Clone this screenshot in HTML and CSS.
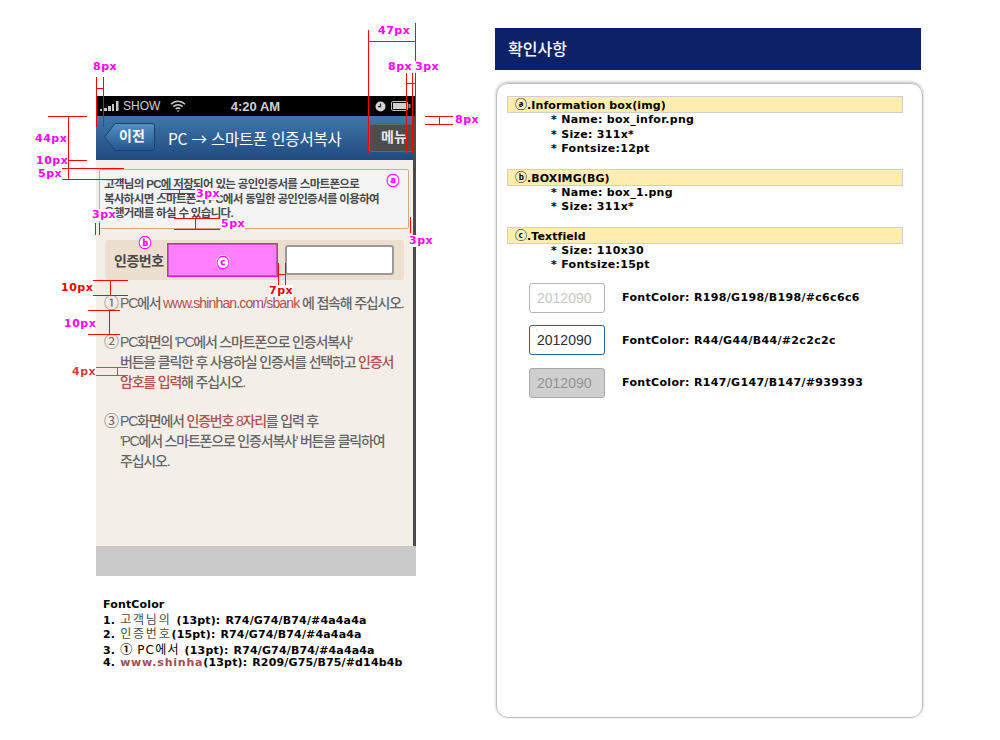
FILE: index.html
```html
<!DOCTYPE html>
<html lang="ko">
<head>
    <meta charset="UTF-8">
    <title>인증서복사 화면 가이드</title>
    <link rel="stylesheet" href="styles.css">
</head>
<body>
<div class="page">
    <div class="left">
        <div class="phone">
            <div class="status">
                <span class="status-left">
                    <svg class="signal" width="19" height="10" viewBox="0 0 19 10"><path d="M0 8h2v2H0zM4 7h3v3H4zM8 5h3v5H8zM12 3h2v7h-2zM16 0h2.500v10H16z" fill="#c8c8c8"/></svg>
                    <span>SHOW</span>
                    <svg class="wifi" width="16" height="12" viewBox="0 0 16 12"><path d="M1 4.200a10 10 0 0 1 14 0M3.400 6.600a6.600 6.600 0 0 1 9.200 0M5.800 9a3 3 0 0 1 4.400 0" fill="none" stroke="#d0d0d0" stroke-width="1.500"/><path d="M8 12l-1.500-1.600h3z" fill="#d0d0d0"/></svg>
                </span>
                <span class="clock">4:20 AM</span>
                <span class="status-right">
                    <svg width="11" height="11" viewBox="0 0 11 11"><circle cx="5.500" cy="5.500" r="5" fill="#d4d4d4"/><path d="M5.500 2.500v3.200H3" fill="none" stroke="#222" stroke-width="1.200"/></svg>
                    <svg width="20" height="10" viewBox="0 0 20 10"><rect x=".5" y=".5" width="16" height="9" rx="1.500" fill="none" stroke="#bbb"/><rect x="2" y="2" width="13" height="6" fill="#d0d0d0"/><rect x="17.500" y="3" width="2" height="4" fill="#888"/></svg>
                </span>
            </div>
            <div class="nav">
                <span class="back">
                    <svg class="back-shape" width="51" height="28" viewBox="0 0 51 28">
                        <defs><linearGradient id="backFill" x1="0" y1="0" x2="0" y2="1"><stop offset="0" stop-color="#5590c4"/><stop offset="1" stop-color="#24578f"/></linearGradient></defs>
                        <path d="M11 .5h37a2.500 2.500 0 0 1 2.500 2.500v22a2.500 2.500 0 0 1-2.500 2.500H11L.7 14z" fill="url(#backFill)" stroke="#1c3f6c"/>
                    </svg>
                    <span class="back-text">이전</span>
                </span>
                <span class="nav-title">PC → 스마트폰 인증서복사</span>
                <span class="menu">메뉴</span>
            </div>
            <div class="content">
                <div class="info">
                    <p>고객님의 PC에 저장되어 있는 공인인증서를 스마트폰으로</p>
                    <p>복사하시면 스마트폰과 PC에서 동일한 공인인증서를 이용하여</p>
                    <p>은행거래를 하실 수 있습니다.</p>
                </div>
                <div class="code-box">
                    <span class="code-label">인증번호</span>
                    <span class="field-mark"></span>
                    <span class="field"></span>
                </div>
                <ol class="steps">
                    <li class="step">
                        <p><span class="num">①</span>PC에서 <em class="link">www.shinhan.com/sbank</em> 에 접속해 주십시오.</p>
                    </li>
                    <li class="step">
                        <p><span class="num">②</span>PC화면의 'PC에서 스마트폰으로 인증서복사'</p>
                        <p class="cont">버튼을 클릭한 후 사용하실 인증서를 선택하고 <em>인증서</em></p>
                        <p class="cont"><em>암호를 입력</em>해 주십시오.</p>
                    </li>
                    <li class="step">
                        <p><span class="num">③</span>PC화면에서 <em>인증번호 8자리</em>를 입력 후</p>
                        <p class="cont">'PC에서 스마트폰으로 인증서복사' 버튼을 클릭하여</p>
                        <p class="cont">주십시오.</p>
                    </li>
                </ol>
            </div>
            <div class="phone-foot"></div>
        </div>
        <div class="legend">
            <p>FontColor</p>
            <p>1. <span class="gray">고객님의</span> (13pt): R74/G74/B74/#4a4a4a</p>
            <p>2. <span class="gray">인증번호</span>(15pt): R74/G74/B74/#4a4a4a</p>
            <p>3. <span class="circ">①</span> <span class="wide">PC에서</span> (13pt): R74/G74/B74/#4a4a4a</p>
            <p>4. <span class="red">www.shinha</span>(13pt): R209/G75/B75/#d14b4b</p>
        </div>
    </div>

    <div class="right">
        <h1 class="title">확인사항</h1>
        <div class="panel">
            <section class="spec">
                <h2><span class="circ">ⓐ</span>.Information box(img)</h2>
                <p>* Name: box_infor.png</p>
                <p>* Size: 311x*</p>
                <p>* Fontsize:12pt</p>
            </section>
            <section class="spec">
                <h2><span class="circ">ⓑ</span>.BOXIMG(BG)</h2>
                <p>* Name: box_1.png</p>
                <p>* Size: 311x*</p>
            </section>
            <section class="spec">
                <h2><span class="circ">ⓒ</span>.Textfield</h2>
                <p>* Size: 110x30</p>
                <p>* Fontsize:15pt</p>
            </section>
            <div class="samples">
                <div class="sample"><span class="tf tf-idle">2012090</span><span>FontColor: R198/G198/B198/#c6c6c6</span></div>
                <div class="sample"><span class="tf tf-focus">2012090</span><span>FontColor: R44/G44/B44/#2c2c2c</span></div>
                <div class="sample"><span class="tf tf-off">2012090</span><span>FontColor: R147/G147/B147/#939393</span></div>
            </div>
        </div>
    </div>

    <!-- measurement marks drawn over the screen -->
    <svg class="marks" width="1000" height="740" viewBox="0 0 1000 740">
        <path d="M96.500 77v50M103.500 77v50M96 88.500h8
                 M368.500 30v123M415.500 23v38M368 41.500h48
                 M406.500 73v80M412.500 73v80M415.500 73v80M406 83.500h10
                 M425 116.500h28M425 124.500h28M439.500 116v9
                 M48 116.500h39M68.500 116v64M67 160.500h20M53 168.500h71M62 179.500h62
                 M161 189.500h34M161 193.500h34M179.500 189v5
                 M174 218.500h46M174 229.500h46M195.500 218v12
                 M95.500 223v12M99.500 223v12M410.500 217v16M413.500 217v16"
              fill="none" stroke="#f00" stroke-width="1"/>
        <path d="M93 280.500h35M93 295.500h35M110.500 280v16
                 M88 310.500h32M88 334.500h32M109.500 310v25
                 M278.500 263v22M285.500 263v22M278 274.500h8"
              fill="none" stroke="#f00" stroke-width="1"/>
        <path d="M96 367.500h32M96 375.500h32M117.500 367v9" fill="none" stroke="#d44" stroke-width="1"/>
    </svg>
    <span class="mark m-left8">8px</span>
    <span class="mark m-47">47px</span>
    <span class="mark m-right8">8px</span>
    <span class="mark m-right3">3px</span>
    <span class="mark m-side8">8px</span>
    <span class="mark m-44">44px</span>
    <span class="mark m-10a">10px</span>
    <span class="mark m-5a">5px</span>
    <span class="mark m-3a">3px</span>
    <span class="mark m-5b">5px</span>
    <span class="mark m-3b">3px</span>
    <span class="mark m-3c">3px</span>
    <span class="mark mark-red m-10b">10px</span>
    <span class="mark m-10c">10px</span>
    <span class="mark mark-red m-7">7px</span>
    <span class="mark mark-soft m-4">4px</span>
    <span class="tag tag-a">ⓐ</span>
    <span class="tag tag-b">ⓑ</span>
    <span class="tag tag-c">ⓒ</span>
</div>
</body>
</html>
```

FILE: styles.css
```css
body {
    margin: 0;
    background-color: #ffffff;
    font-family: "DejaVu Sans", "Noto Sans CJK KR", sans-serif;
    color: #000000;
}
p, h1, h2, ol {
    margin: 0;
    padding: 0;
}
.page {
    position: relative;
    width: 1000px;
    height: 740px;
    overflow: hidden;
    display: flex;
}

/* left column */
.left {
    width: 320px;
    margin: 96px 0 0 96px;
}
.phone {
    width: 320px;
    height: 480px;
    display: flex;
    flex-direction: column;
    font-family: "Liberation Sans", "Noto Sans CJK KR", sans-serif;
}
.status {
    height: 20px;
    flex: none;
    background-color: #000000;
    color: #d0d0d0;
    font-size: 12px;
    display: grid;
    grid-template-columns: 1fr auto 1fr;
    align-items: center;
    padding: 0 5px 0 4px;
    box-sizing: border-box;
}
.status-left {
    display: flex;
    align-items: center;
    gap: 4px;
}
.wifi {
    margin-left: 6px;
}
.clock {
    font-size: 13px;
    font-weight: bold;
}
.status-right {
    display: flex;
    justify-content: flex-end;
    align-items: center;
    gap: 5px;
}
.nav {
    height: 44px;
    flex: none;
    border-right: 3px solid #4a4a4a;
    background: linear-gradient(#4077ab, #1f4a80);
    display: flex;
    align-items: center;
    color: #ffffff;
    box-sizing: border-box;
    padding-left: 8px;
}
.back {
    position: relative;
    width: 51px;
    height: 28px;
    margin-bottom: 2px;
    flex: none;
}
.back-shape {
    position: absolute;
    left: 0;
    top: 0;
}
.back-text {
    position: relative;
    display: block;
    padding-left: 15px;
    font-size: 14px;
    font-weight: bold;
    line-height: 26px;
}
.nav-title {
    margin-left: 13px;
    font-family: "Noto Sans CJK KR", sans-serif;
    font-size: 15.500px;
    letter-spacing: -0.2px;
    white-space: nowrap;
}
.menu {
    width: 44px;
    height: 28px;
    box-sizing: border-box;
    margin-left: auto;
    margin-bottom: 1px;
    background-color: #4d4d4d;
    border: 1px solid #666666;
    border-right: 0;
    border-radius: 3px 0 0 3px;
    font-size: 14px;
    font-weight: bold;
    line-height: 25px;
    padding-left: 11px;
    white-space: nowrap;
    color: #e8e8e8;
}
.content {
    flex: 1;
    background-color: #f3eee8;
    border-right: 3px solid #4a4a4a;
    padding: 9px 4px 0 3px;
    color: #4a4a4a;
}
.info {
    height: 60px;
    background-color: #f4f4f4;
    border: 1px solid #d0aa80;
    border-radius: 2px;
    box-sizing: border-box;
    padding: 7px 0 0 4px;
    font-size: 11.500px;
    font-weight: bold;
    line-height: 14.500px;
    letter-spacing: -0.67px;
    white-space: nowrap;
}
.code-box {
    height: 40px;
    margin: 11px 5px 0 6px;
    background-color: #ecdfcf;
    border-radius: 3px;
    display: flex;
    align-items: center;
    padding-left: 9px;
}
.code-label {
    width: 53px;
    font-size: 14px;
    font-weight: bold;
    letter-spacing: -0.5px;
}
.field-mark {
    width: 111px;
    height: 34px;
    box-sizing: border-box;
    background-color: #ff80ff;
    border: 1px solid #e818d8;
    box-shadow: inset 0 0 0 1px #c858c0;
}
.field {
    width: 109px;
    height: 30px;
    margin-left: 7px;
    box-sizing: border-box;
    background-color: #ffffff;
    border: 2px solid #9a9a9a;
    border-radius: 3px;
}
.steps {
    list-style: none;
    margin: 13px 0 0 5px;
    font-size: 14px;
    letter-spacing: -1.2px;
    line-height: 20px;
    white-space: nowrap;
    color: #666666;
    font-weight: 500;
}
.step {
    margin-bottom: 19px;
}
.num {
    display: inline-block;
    width: 16px;
    font-size: 15px;
    line-height: 1;
    font-weight: normal;
    letter-spacing: 0;
}
.cont {
    padding-left: 16px;
}
.steps em {
    font-style: normal;
    color: #b05050;
}
.steps .link {
    letter-spacing: -0.85px;
}
.phone-foot {
    height: 30px;
    flex: none;
    background-color: #cacaca;
}
.legend {
    margin: 22px 0 0 7px;
    font-size: 11px;
    font-weight: bold;
    line-height: 14.500px;
    letter-spacing: 0.15px;
    word-spacing: 1px;
    white-space: nowrap;
}
.legend p {
    height: 14.500px;
}
.gray {
    color: #4a4a4a;
    font-size: 12px;
    font-weight: normal;
    letter-spacing: 1.800px;
}
.wide {
    font-weight: normal;
    font-size: 12px;
    letter-spacing: 1.200px;
}
.red {
    color: #a05050;
    letter-spacing: 0.8px;
}
.circ {
    font-family: "Noto Sans CJK KR", sans-serif;
    font-size: 12px;
    font-weight: bold;
    letter-spacing: 0;
}

/* right column */
.right {
    width: 428px;
    margin: 28px 0 0 79px;
}
.title {
    width: 426px;
    height: 42px;
    background-color: #0d2169;
    color: #ffffff;
    font-family: "Noto Sans CJK KR", sans-serif;
    font-size: 16px;
    font-weight: 500;
    line-height: 40px;
    padding-left: 13px;
    box-sizing: border-box;
}
.panel {
    width: 427px;
    height: 635px;
    margin: 13px 0 0 1px;
    box-sizing: border-box;
    border: 1px solid #bdbdbd;
    border-radius: 12px;
    box-shadow: 0 -1px 3px #bbbbbb;
    padding: 12px 19px 0 10px;
    font-size: 11px;
    font-weight: bold;
}
.spec {
    margin-bottom: 12px;
}
.spec h2 {
    height: 17px;
    background-color: #ffedb0;
    border: 1px solid #cfcfcf;
    box-sizing: border-box;
    font-size: 11px;
    line-height: 14px;
    padding-left: 7px;
    letter-spacing: 0.1px;
}
.spec p {
    padding-left: 44px;
    line-height: 14.500px;
    letter-spacing: 0.3px;
}
.samples {
    margin: -2px 0 0 22px;
    display: flex;
    flex-direction: column;
    gap: 12.500px;
    letter-spacing: 0.33px;
}
.sample {
    display: flex;
    align-items: center;
    gap: 17px;
    height: 30px;
}
.tf {
    width: 76px;
    height: 30px;
    box-sizing: border-box;
    border-radius: 3px;
    padding-left: 7px;
    font-family: "Liberation Sans", sans-serif;
    font-size: 14px;
    font-weight: normal;
    letter-spacing: 0;
    line-height: 28px;
}
.tf-idle {
    border: 1px solid #b4b4b4;
    color: #c6c6c6;
}
.tf-focus {
    border: 1px solid #2f6496;
    color: #2c2c2c;
}
.tf-off {
    border: 1px solid #a8a8a8;
    background-color: #cfcfcf;
    color: #939393;
}

/* measurement overlay */
.marks {
    position: absolute;
    left: 0;
    top: 0;
}
.mark {
    position: absolute;
    color: #ff00ff;
    font-size: 11px;
    font-weight: bold;
    line-height: 12px;
    letter-spacing: 0.5px;
    background-color: #ffffff;
}
.mark-red {
    color: #ee0000;
}
.mark-soft {
    color: #d04040;
}
.m-left8 { left: 93px; top: 61px; }
.m-47 { left: 378px; top: 25px; }
.m-right8 { left: 388px; top: 61px; }
.m-right3 { left: 415px; top: 61px; }
.m-side8 { left: 455px; top: 114px; }
.m-44 { left: 35px; top: 133px; }
.m-10a { left: 36px; top: 155px; }
.m-5a { left: 38px; top: 168px; }
.m-3a { left: 196px; top: 188px; }
.m-5b { left: 221px; top: 218px; }
.m-3b { left: 92px; top: 209px; }
.m-3c { left: 409px; top: 235px; }
.m-10b { left: 61px; top: 282px; }
.m-10c { left: 64px; top: 318px; }
.m-7 { left: 269px; top: 285px; }
.m-4 { left: 72px; top: 366px; }
.tag {
    position: absolute;
    color: #ff00ff;
    background-color: #ffffff;
    border-radius: 50%;
    width: 14px;
    height: 14px;
    line-height: 14px;
    text-align: center;
    font-size: 13px;
    font-weight: bold;
    font-family: "Noto Sans CJK KR", sans-serif;
    -webkit-text-stroke: 0.4px #ff00ff;
}
.tag-a { left: 386px; top: 173px; }
.tag-b { left: 138px; top: 235px; }
.tag-c { left: 216px; top: 255px; }
```
